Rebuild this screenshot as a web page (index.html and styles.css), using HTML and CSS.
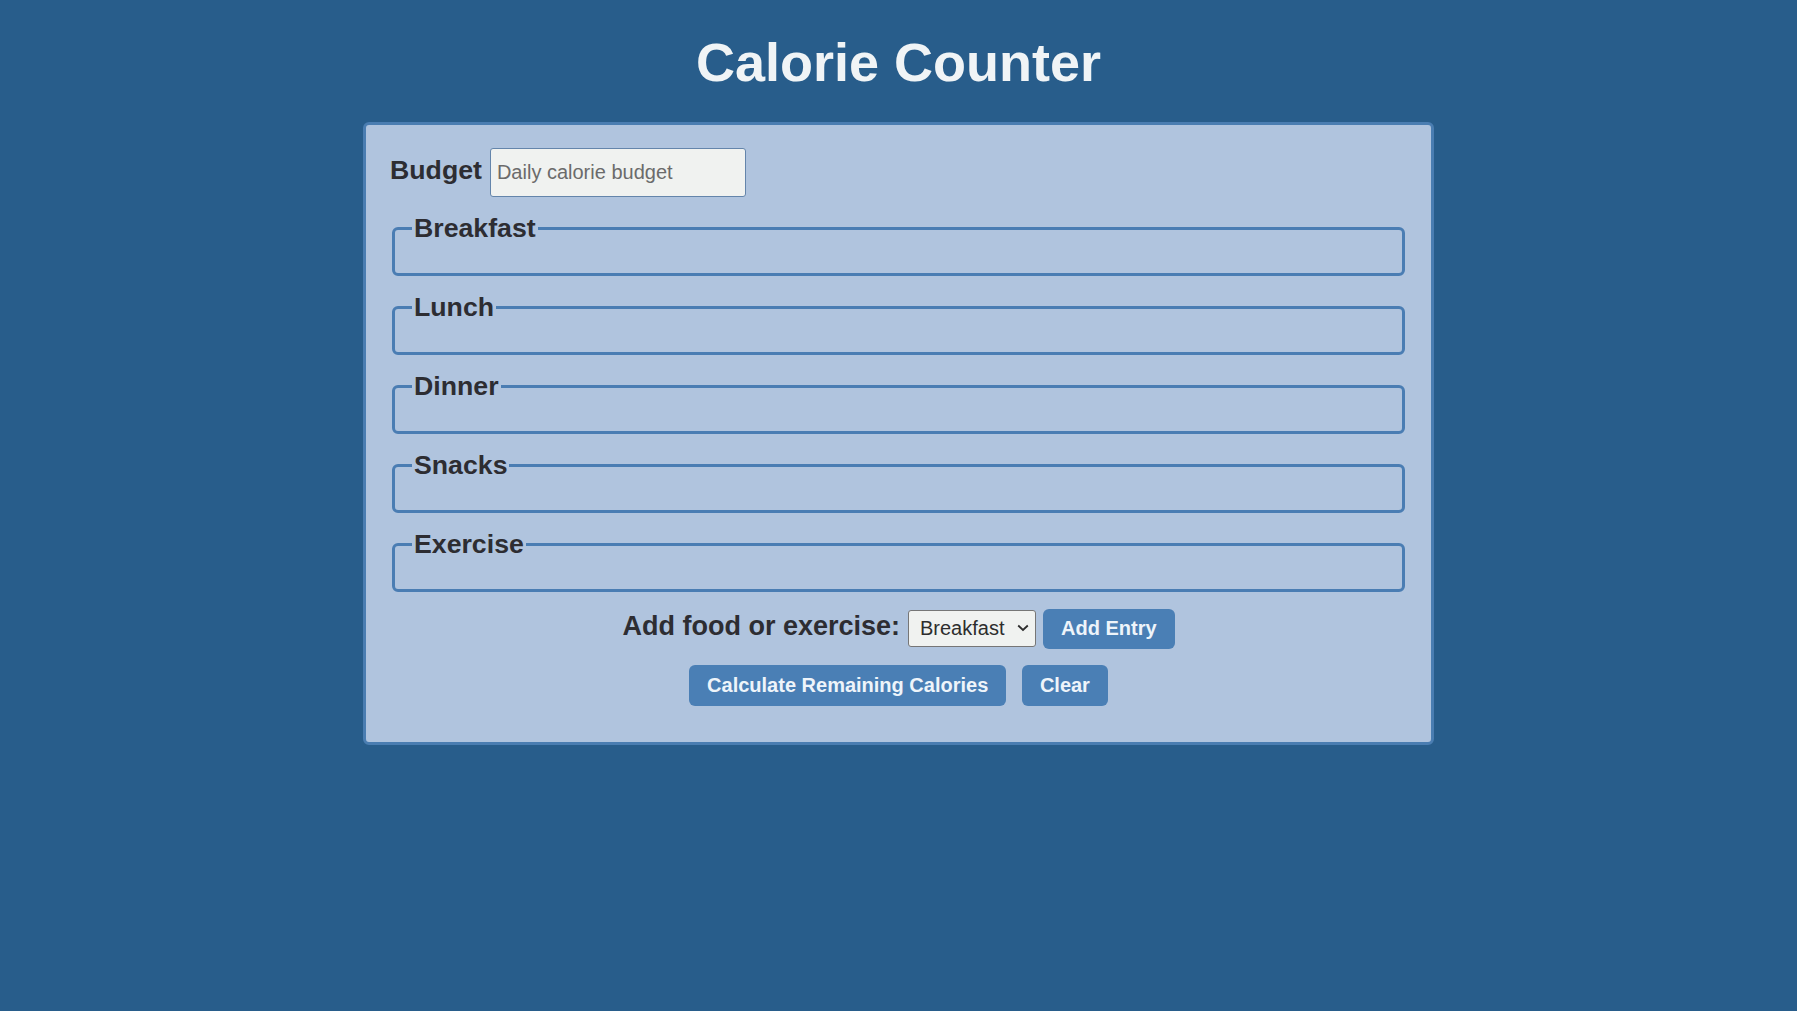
FILE: index.html
```html
<!DOCTYPE html>
<html lang="en">
<head>
<meta charset="utf-8">
<title>Calorie Counter</title>
<link rel="stylesheet" href="styles.css">
</head>
<body>
  <h1 class="title">Calorie Counter</h1>
  <main class="container">
    <form class="calorie-form">
      <div class="budget-row">
        <label class="budget-label" for="budget">Budget</label>
        <input class="budget-input" type="number" id="budget" placeholder="Daily calorie budget">
      </div>
      <fieldset class="meal"><legend class="meal-legend">Breakfast</legend><div class="input-container"></div></fieldset>
      <fieldset class="meal"><legend class="meal-legend">Lunch</legend><div class="input-container"></div></fieldset>
      <fieldset class="meal"><legend class="meal-legend">Dinner</legend><div class="input-container"></div></fieldset>
      <fieldset class="meal"><legend class="meal-legend">Snacks</legend><div class="input-container"></div></fieldset>
      <fieldset class="meal"><legend class="meal-legend">Exercise</legend><div class="input-container"></div></fieldset>
      <div class="add-row">
        <label class="add-label" for="entry-dropdown">Add food or exercise:</label>
        <span class="select-wrap">
          <select class="entry-select" id="entry-dropdown">
            <option>Breakfast</option>
            <option>Lunch</option>
            <option>Dinner</option>
            <option>Snacks</option>
            <option>Exercise</option>
          </select>
          <svg class="select-chevron" width="12" height="8" viewBox="0 0 12 8" aria-hidden="true"><path d="M1.2 1.5 L6 6 L10.8 1.5" fill="none" stroke="#2d2d2d" stroke-width="1.8"/></svg>
        </span>
        <button type="button" class="btn">Add Entry</button>
      </div>
      <div class="actions-row">
        <button type="button" class="btn">Calculate Remaining Calories</button>
        <button type="button" class="btn">Clear</button>
      </div>
    </form>
  </main>
</body>
</html>
```
FILE: styles.css
```css
* {
  box-sizing: border-box;
}

body {
  margin: 0;
  min-height: 1011px;
  background-color: #285d8b;
  font-family: "Liberation Sans", Arial, sans-serif;
  color: #2d2d32;
}

.title {
  margin: 31px 0 29px;
  text-align: center;
  font-size: 54px;
  font-weight: 700;
  line-height: normal;
  color: #f0f4f6;
}

.container {
  width: 1071px;
  margin: 0 auto;
  padding: 23px 24px 36px;
  background-color: #b0c4de;
  border: 3px solid #4a7db1;
  border-radius: 6px;
}

.calorie-form {
  margin: 0;
}

.budget-row {
  display: flex;
  align-items: baseline;
  gap: 8px;
  height: 49px;
}

.budget-label {
  font-size: 26.7px;
  font-weight: 700;
  line-height: normal;
}

.budget-input {
  width: 256px;
  height: 49px;
  padding: 0 6px;
  font-family: "Liberation Sans", Arial, sans-serif;
  font-size: 20px;
  color: #333;
  background-color: #f0f2f0;
  border: 1px solid #6485ab;
  border-radius: 3px;
  -moz-appearance: textfield;
}

.budget-input::placeholder {
  color: #6b6b6b;
}

.budget-input::-webkit-outer-spin-button,
.budget-input::-webkit-inner-spin-button {
  -webkit-appearance: none;
  margin: 0;
}

.meal {
  margin: 16.3px 2px 0;
  padding: 0 17px 28.7px;
  border: 3px solid #4a7db3;
  border-radius: 6px;
  min-width: 0;
}

.meal-legend {
  padding: 0 2px;
  font-size: 26.7px;
  font-weight: 700;
  line-height: normal;
}

.add-row {
  margin-top: 17px;
  display: flex;
  justify-content: center;
  align-items: baseline;
}

.add-label {
  font-size: 27px;
  font-weight: 700;
  margin-right: 8px;
}

.select-wrap {
  position: relative;
  display: inline-flex;
  margin-right: 7px;
}

.entry-select {
  -webkit-appearance: none;
  appearance: none;
  width: 128px;
  height: 37px;
  padding: 0 0 0 11px;
  font-family: "Liberation Sans", Arial, sans-serif;
  font-size: 20px;
  color: #2d2d2d;
  background-color: #f0f2f0;
  border: 1px solid #767676;
  border-radius: 3px;
}

.select-chevron {
  position: absolute;
  right: 7px;
  top: 14px;
  pointer-events: none;
}

.btn {
  padding: 8.5px 18px;
  font-family: "Liberation Sans", Arial, sans-serif;
  font-size: 20px;
  font-weight: 700;
  line-height: normal;
  color: #eef4fa;
  background-color: #4a7fb5;
  border: none;
  border-radius: 6px;
  cursor: pointer;
}

.actions-row {
  margin-top: 15.7px;
  display: flex;
  justify-content: center;
  gap: 15.6px;
}

.actions-row .btn {
  padding: 9px 18px;
}
```
